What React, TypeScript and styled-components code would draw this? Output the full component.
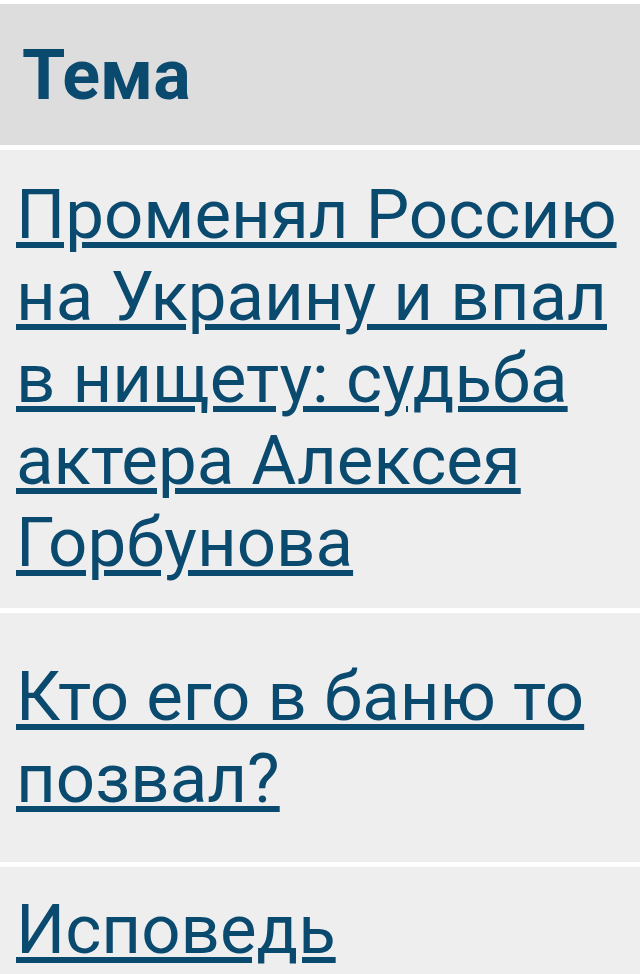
import styled, { createGlobalStyle } from "styled-components";

const GlobalStyle = createGlobalStyle`
  html, body {
    margin: 0;
    padding: 0;
    background: #ffffff;
  }
  body {
    font-family: Roboto, "Noto Sans", "Liberation Sans", sans-serif;
  }
`;

const Table = styled.div`
  display: flex;
  flex-direction: column;
  gap: 5px;
  padding-top: 4px;
  background: #ffffff;
`;

const HeaderCell = styled.div`
  background: #dddddd;
  height: 141px;
  display: flex;
  align-items: center;
  padding: 0 22px;
  color: #0b4a6f;
  font-weight: 700;
  font-size: 70px;
`;

const Row = styled.div<{ $top: number; $bottom: number }>`
  background: #eeeeee;
  padding: ${(p) => p.$top}px 4px ${(p) => p.$bottom}px 16px;
`;

const TopicLink = styled.a`
  color: #0b4a6f;
  font-size: 69px;
  line-height: 82px;
  text-decoration: underline;
  text-decoration-thickness: 6px;
  text-underline-offset: 4px;
`;

const topics = [
  {
    title:
      "Променял Россию на Украину и впал в нищету: судьба актера Алексея Горбунова",
    top: 24,
    bottom: 24,
  },
  { title: "Кто его в баню то позвал?", top: 43, bottom: 42 },
  { title: "Исповедь", top: 22, bottom: 40 },
];

export default function App() {
  return (
    <>
      <GlobalStyle />
      <Table>
        <HeaderCell>Тема</HeaderCell>
        {topics.map((t) => (
          <Row key={t.title} $top={t.top} $bottom={t.bottom}>
            <TopicLink href="#">{t.title}</TopicLink>
          </Row>
        ))}
      </Table>
    </>
  );
}
